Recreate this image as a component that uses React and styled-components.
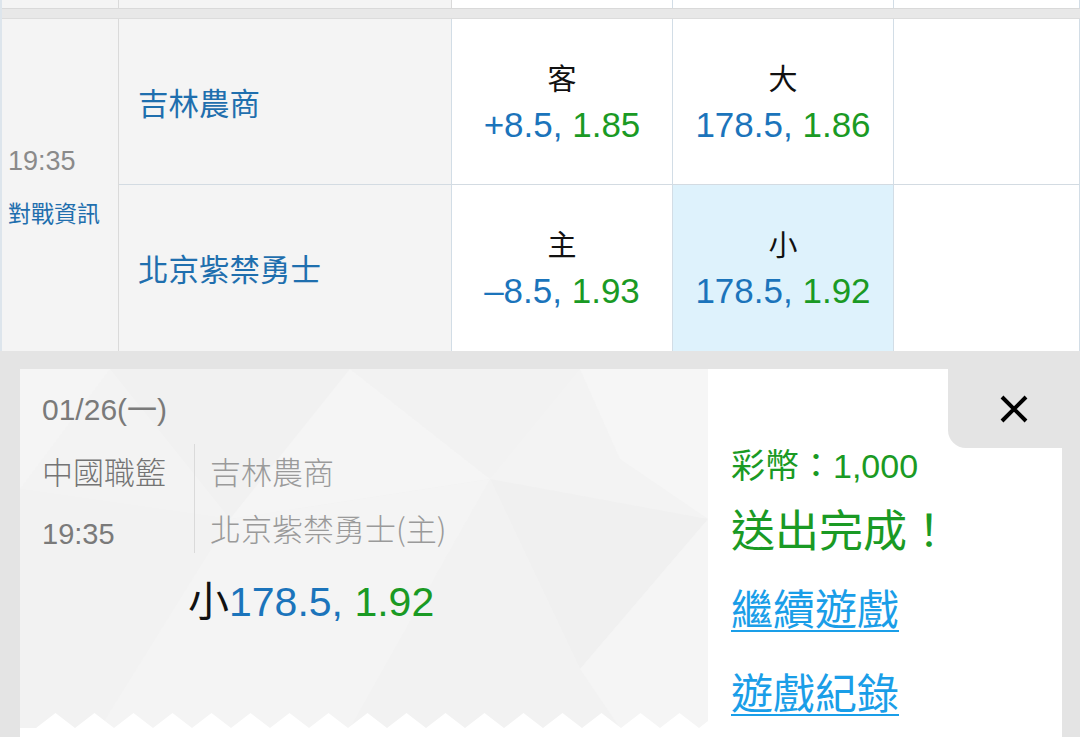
import React from 'react';
import styled, { createGlobalStyle } from 'styled-components';

const GlobalStyle = createGlobalStyle`
  html, body {
    margin: 0;
    padding: 0;
    background: #e4e4e4;
    overflow: hidden;
  }
  body {
    font-family: "Liberation Sans", "Noto Sans CJK TC", sans-serif;
  }
`;

const Page = styled.div`
  width: 1080px;
  height: 737px;
  overflow: hidden;
  background: #e4e4e4;
`;

const Table = styled.div`
  border-left: 2px solid #dde5ec;
`;

const columns = '117px 333px 221px 221px 1fr';

const Stub = styled.div`
  display: grid;
  grid-template-columns: ${columns};
  height: 8px;
`;

const StubCell = styled.div`
  background: ${(p) => (p.$grey ? '#f4f4f4' : '#fff')};
  border-right: 1px solid ${(p) => (p.$grey ? '#dadada' : '#d2dde6')};
`;

const Separator = styled.div`
  height: 9px;
  background: #e8e8e8;
  border-top: 1px solid #d9d9d9;
  border-bottom: 1px solid #dcdcdc;
`;

const MatchRow = styled.div`
  display: grid;
  grid-template-columns: ${columns};
  grid-template-rows: 166px 166px;
`;

const TimeCell = styled.div`
  grid-row: 1 / span 2;
  background: #f4f4f4;
  border-right: 1px solid #dadada;
  display: flex;
  flex-direction: column;
  justify-content: center;
  padding-left: 6px;
  gap: 18px;
`;

const TimeText = styled.div`
  font-size: 27px;
  line-height: 36px;
  color: #8a8a8a;
`;

const InfoLink = styled.div`
  font-size: 23px;
  line-height: 30px;
  color: #1f6fae;
  font-family: "Noto Sans CJK TC", sans-serif;
`;

const TeamCell = styled.div`
  background: #f4f4f4;
  border-right: 1px solid #d2dde6;
  border-bottom: ${(p) => (p.$first ? '1px solid #d3dbe2' : 'none')};
  display: flex;
  align-items: center;
  padding-left: 19px;
  font-family: "Noto Sans CJK TC", sans-serif;
  font-size: 30.5px;
  color: #1f6fae;
`;

const OddsCell = styled.div`
  background: ${(p) => (p.$active ? '#def2fc' : '#fff')};
  border-right: 1px solid #d2dde6;
  border-bottom: ${(p) => (p.$first ? '1px solid #d3dbe2' : 'none')};
  display: flex;
  flex-direction: column;
  align-items: center;
  justify-content: center;
  gap: 6px;
`;

const OddsLabel = styled.div`
  font-family: "Noto Sans CJK TC", sans-serif;
  font-size: 29px;
  line-height: 40px;
  color: #111;
`;

const OddsValue = styled.div`
  font-size: 35px;
  line-height: 44px;
`;

const Blue = styled.span`
  color: #1b74bb;
`;

const Green = styled.span`
  color: #1a9a24;
`;

const Dark = styled.span`
  color: #111;
  font-family: "Noto Sans CJK TC", sans-serif;
`;

const Panel = styled.div`
  margin: 18px 18px 0 20px;
  display: grid;
  grid-template-columns: 688px 354px;
  background: #fff;
  height: 380px;
`;

const Ticket = styled.div`
  position: relative;
  height: 359px;
  background: #f3f3f3;
  overflow: hidden;
`;

const TicketArt = styled.svg`
  position: absolute;
  inset: 0;
  z-index: 0;
`;

const TicketBody = styled.div`
  position: relative;
  z-index: 1;
  padding: 23px 0 0 22px;
`;

const DateLine = styled.div`
  font-size: 30px;
  line-height: 36px;
  color: #7a7a7a;
`;

const GameInfo = styled.div`
  display: flex;
  margin-top: 16px;
`;

const LeagueCol = styled.div`
  width: 152px;
  border-right: 1px solid #dadada;
  display: flex;
  flex-direction: column;
  gap: 16px;
  height: 109px;
`;

const League = styled.div`
  font-family: "Noto Sans CJK TC", sans-serif;
  font-size: 31px;
  line-height: 54px;
  color: #747474;
  font-weight: 300;
`;

const GameTime = styled.div`
  font-size: 29px;
  line-height: 40px;
  color: #7a7a7a;
`;

const TeamsCol = styled.div`
  padding-left: 15px;
  display: flex;
  flex-direction: column;
  gap: 3px;
`;

const TeamName = styled.div`
  font-family: "Noto Sans CJK TC", sans-serif;
  font-size: 31px;
  line-height: 54px;
  color: #9a9a9a;
  font-weight: 300;
`;

const BetLine = styled.div`
  margin: 18px 0 0 146px;
  font-size: 41px;
  line-height: 50px;
`;

const Zigzag = styled.svg`
  position: absolute;
  left: 0;
  bottom: 0;
  z-index: 2;
`;

const Result = styled.div`
  display: flex;
  flex-direction: column;
`;

const TabRow = styled.div`
  display: flex;
  justify-content: flex-end;
`;

const CloseTab = styled.div`
  width: 114px;
  height: 79px;
  background: #e4e4e4;
  border-bottom-left-radius: 18px;
  display: flex;
  align-items: center;
  justify-content: center;
  padding-left: 18px;
  box-sizing: border-box;
`;

const ResultBody = styled.div`
  padding-left: 23px;
  display: flex;
  flex-direction: column;
`;

const Coins = styled.div`
  font-size: 34px;
  line-height: 36px;
  color: #1a9a24;
`;

const Done = styled.div`
  margin-top: 16px;
  font-family: "Noto Sans CJK TC", sans-serif;
  font-size: 44px;
  line-height: 56px;
  color: #1a9a24;
`;

const Links = styled.div`
  margin-top: 25px;
  display: flex;
  flex-direction: column;
  gap: 32px;
`;

const ActionLink = styled.a`
  font-family: "Noto Sans CJK TC", sans-serif;
  font-size: 42px;
  line-height: 52px;
  color: #1a9ee8;
  text-decoration: underline;
  text-decoration-thickness: 2px;
  text-underline-offset: 5px;
  cursor: pointer;
`;

const rows = [
  { team: '吉林農商', spread: ['客', '+8.5', '1.85'], total: ['大', '178.5', '1.86'] },
  { team: '北京紫禁勇士', spread: ['主', '\u20138.5', '1.93'], total: ['小', '178.5', '1.92'], picked: true },
];

const zigzagPath = () => {
  let d = 'M0 15';
  for (let x = 16; x < 688; x += 39) {
    d += ` L${x} 15 L${x + 19.5} 0 L${x + 39} 15`;
  }
  return d + ' Z';
};

const Odds = ({ label, line, price, active, first }) => (
  <OddsCell $active={active} $first={first}>
    <OddsLabel>{label}</OddsLabel>
    <OddsValue>
      <Blue>{line}, </Blue>
      <Green>{price}</Green>
    </OddsValue>
  </OddsCell>
);

const App = () => {
  return (
    <Page>
      <GlobalStyle />
      <Table>
        <Stub>
          <StubCell $grey />
          <StubCell $grey />
          <StubCell />
          <StubCell />
          <StubCell />
        </Stub>
        <Separator />
        <MatchRow>
          <TimeCell>
            <TimeText>19:35</TimeText>
            <InfoLink>對戰資訊</InfoLink>
          </TimeCell>
          {rows.map((r, i) => (
            <React.Fragment key={r.team}>
              <TeamCell $first={i === 0}>{r.team}</TeamCell>
              <Odds label={r.spread[0]} line={r.spread[1]} price={r.spread[2]} first={i === 0} />
              <Odds label={r.total[0]} line={r.total[1]} price={r.total[2]} first={i === 0} active={r.picked} />
              <OddsCell $first={i === 0} />
            </React.Fragment>
          ))}
        </MatchRow>
      </Table>

      <Panel>
        <Ticket>
          <TicketArt width="688" height="359" viewBox="0 0 688 359">
            <polygon points="0,0 90,0 0,120" fill="#f5f5f5" />
            <polygon points="90,0 330,0 210,150" fill="#f1f1f1" />
            <polygon points="210,150 330,0 470,110" fill="#f5f5f5" />
            <polygon points="470,110 330,0 560,0" fill="#f2f2f2" />
            <polygon points="560,0 688,0 688,150 600,90" fill="#f6f6f6" />
            <polygon points="0,120 210,150 80,359 0,359" fill="#f2f2f2" />
            <polygon points="210,150 470,110 330,359 80,359" fill="#f4f4f4" />
            <polygon points="470,110 688,150 560,300" fill="#f0f0f0" />
            <polygon points="330,359 470,110 560,300 600,359" fill="#f2f2f2" />
            <polygon points="560,300 688,150 688,359 600,359" fill="#f5f5f5" />
          </TicketArt>
          <TicketBody>
            <DateLine>01/26(一)</DateLine>
            <GameInfo>
              <LeagueCol>
                <League>中國職籃</League>
                <GameTime>19:35</GameTime>
              </LeagueCol>
              <TeamsCol>
                <TeamName>吉林農商</TeamName>
                <TeamName>北京紫禁勇士(主)</TeamName>
              </TeamsCol>
            </GameInfo>
            <BetLine>
              <Dark>小</Dark>
              <Blue>178.5, </Blue>
              <Green>1.92</Green>
            </BetLine>
          </TicketBody>
          <Zigzag width="688" height="15" viewBox="0 0 688 15">
            <path d={zigzagPath()} fill="#fff" />
          </Zigzag>
        </Ticket>

        <Result>
          <TabRow>
            <CloseTab>
              <svg width="30" height="30" viewBox="0 0 30 30">
                <path d="M3 3 L27 27 M27 3 L3 27" stroke="#000" strokeWidth="4" />
              </svg>
            </CloseTab>
          </TabRow>
          <ResultBody>
            <Coins>彩幣：1,000</Coins>
            <Done>送出完成！</Done>
            <Links>
              <ActionLink>繼續遊戲</ActionLink>
              <ActionLink>遊戲紀錄</ActionLink>
            </Links>
          </ResultBody>
        </Result>
      </Panel>
    </Page>
  );
};

export default App;
